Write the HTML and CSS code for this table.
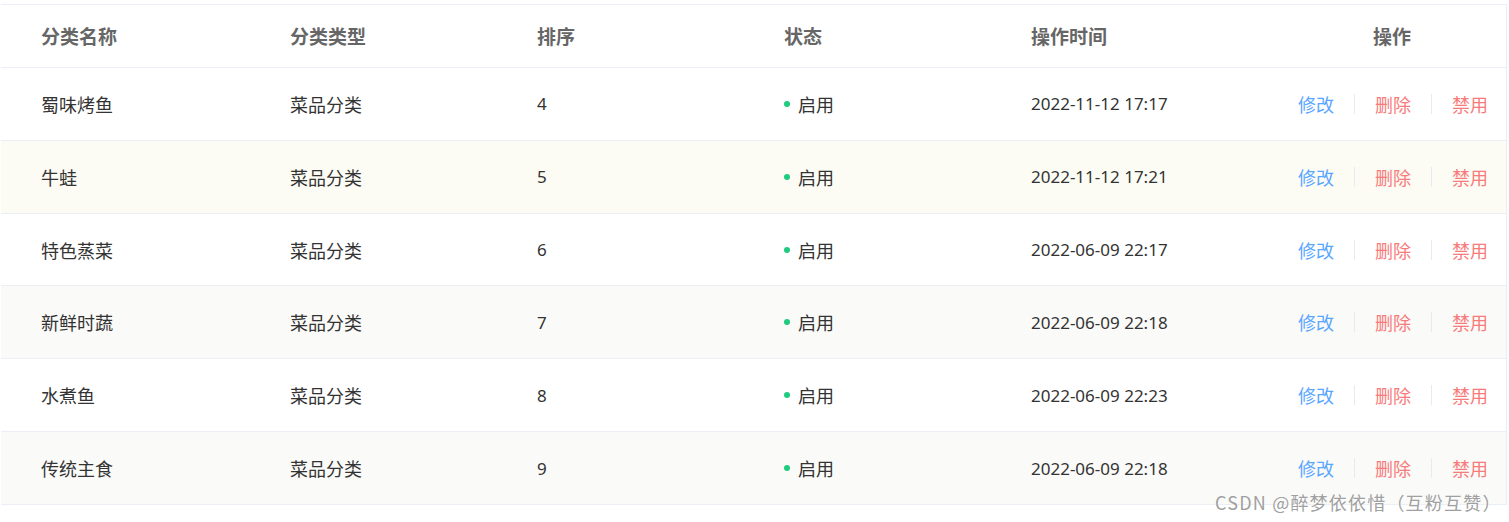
FILE: index.html
```html
<!DOCTYPE html>
<html lang="zh-CN">
<head>
<meta charset="utf-8">
<title>分类管理</title>
<link rel="stylesheet" href="styles.css">
</head>
<body>
<div class="table">
  <div class="row head">
    <div class="cell">分类名称</div>
    <div class="cell">分类类型</div>
    <div class="cell">排序</div>
    <div class="cell">状态</div>
    <div class="cell">操作时间</div>
    <div class="cell ops">操作</div>
  </div>
  <div class="row">
    <div class="cell">蜀味烤鱼</div>
    <div class="cell">菜品分类</div>
    <div class="cell num">4</div>
    <div class="cell"><span class="dot"></span>启用</div>
    <div class="cell num">2022-11-12 17:17</div>
    <div class="cell ops"><a class="edit">修改</a><i class="sep"></i><a class="del">删除</a><i class="sep"></i><a class="ban">禁用</a></div>
  </div>
  <div class="row hover">
    <div class="cell">牛蛙</div>
    <div class="cell">菜品分类</div>
    <div class="cell num">5</div>
    <div class="cell"><span class="dot"></span>启用</div>
    <div class="cell num">2022-11-12 17:21</div>
    <div class="cell ops"><a class="edit">修改</a><i class="sep"></i><a class="del">删除</a><i class="sep"></i><a class="ban">禁用</a></div>
  </div>
  <div class="row">
    <div class="cell">特色蒸菜</div>
    <div class="cell">菜品分类</div>
    <div class="cell num">6</div>
    <div class="cell"><span class="dot"></span>启用</div>
    <div class="cell num">2022-06-09 22:17</div>
    <div class="cell ops"><a class="edit">修改</a><i class="sep"></i><a class="del">删除</a><i class="sep"></i><a class="ban">禁用</a></div>
  </div>
  <div class="row stripe">
    <div class="cell">新鲜时蔬</div>
    <div class="cell">菜品分类</div>
    <div class="cell num">7</div>
    <div class="cell"><span class="dot"></span>启用</div>
    <div class="cell num">2022-06-09 22:18</div>
    <div class="cell ops"><a class="edit">修改</a><i class="sep"></i><a class="del">删除</a><i class="sep"></i><a class="ban">禁用</a></div>
  </div>
  <div class="row">
    <div class="cell">水煮鱼</div>
    <div class="cell">菜品分类</div>
    <div class="cell num">8</div>
    <div class="cell"><span class="dot"></span>启用</div>
    <div class="cell num">2022-06-09 22:23</div>
    <div class="cell ops"><a class="edit">修改</a><i class="sep"></i><a class="del">删除</a><i class="sep"></i><a class="ban">禁用</a></div>
  </div>
  <div class="row stripe">
    <div class="cell">传统主食</div>
    <div class="cell">菜品分类</div>
    <div class="cell num">9</div>
    <div class="cell"><span class="dot"></span>启用</div>
    <div class="cell num">2022-06-09 22:18</div>
    <div class="cell ops"><a class="edit">修改</a><i class="sep"></i><a class="del">删除</a><i class="sep"></i><a class="ban">禁用</a></div>
  </div>
</div>
<div class="watermark">CSDN @醉梦依依惜（互粉互赞）</div>
</body>
</html>
```
FILE: styles.css
```css
html, body {
  margin: 0;
  padding: 0;
  background: #fff;
}
body {
  position: relative;
  height: 522px;
  overflow: hidden;
  font-family: "Noto Sans CJK SC", "Noto Sans", sans-serif;
  font-size: 18px;
  color: #333;
}
.table {
  margin: 4px 0 0 1px;
  width: 1506px;
  border-top: 1px solid #ebeef5;
  border-right: 1px solid #ebeef5;
  box-sizing: border-box;
}
.row {
  display: grid;
  grid-template-columns: 249px 247px 247px 247px 247px 1fr;
  height: 72.83px;
  border-bottom: 1px solid #ebeef5;
  box-sizing: border-box;
}
.row.head {
  height: 63px;
  font-size: 19px;
  font-weight: bold;
  color: #666;
}
.row.hover { background: #fcfcf5; }
.row.stripe { background: #fafaf8; }
.cell {
  display: flex;
  align-items: center;
  padding-left: 40px;
  white-space: nowrap;
}
.row.head .cell {
  padding-bottom: 2px;
}
.cell.num {
  font-family: "Noto Sans", "Noto Sans CJK SC", sans-serif;
  font-size: 17px;
}
.cell.ops {
  justify-content: center;
  padding-left: 42px;
}
.dot {
  width: 6px;
  height: 6px;
  border-radius: 50%;
  background: #1fcb7e;
  margin-right: 8px;
}
.ops a { cursor: pointer; }
.edit { color: #58a6ff; }
.del, .ban { color: #f77b7b; }
.sep {
  width: 1px;
  height: 20px;
  background: #e8eaef;
  margin: 0 20px;
}
.row.head .cell.ops {
  padding-left: 40px;
}
.watermark {
  position: absolute;
  left: 1215px;
  top: 489px;
  font-size: 18px;
  letter-spacing: 1.2px;
  color: #a0a0a0;
  text-shadow: 0 0 2px #fff, 0 0 2px #fff;
  white-space: nowrap;
}
```
